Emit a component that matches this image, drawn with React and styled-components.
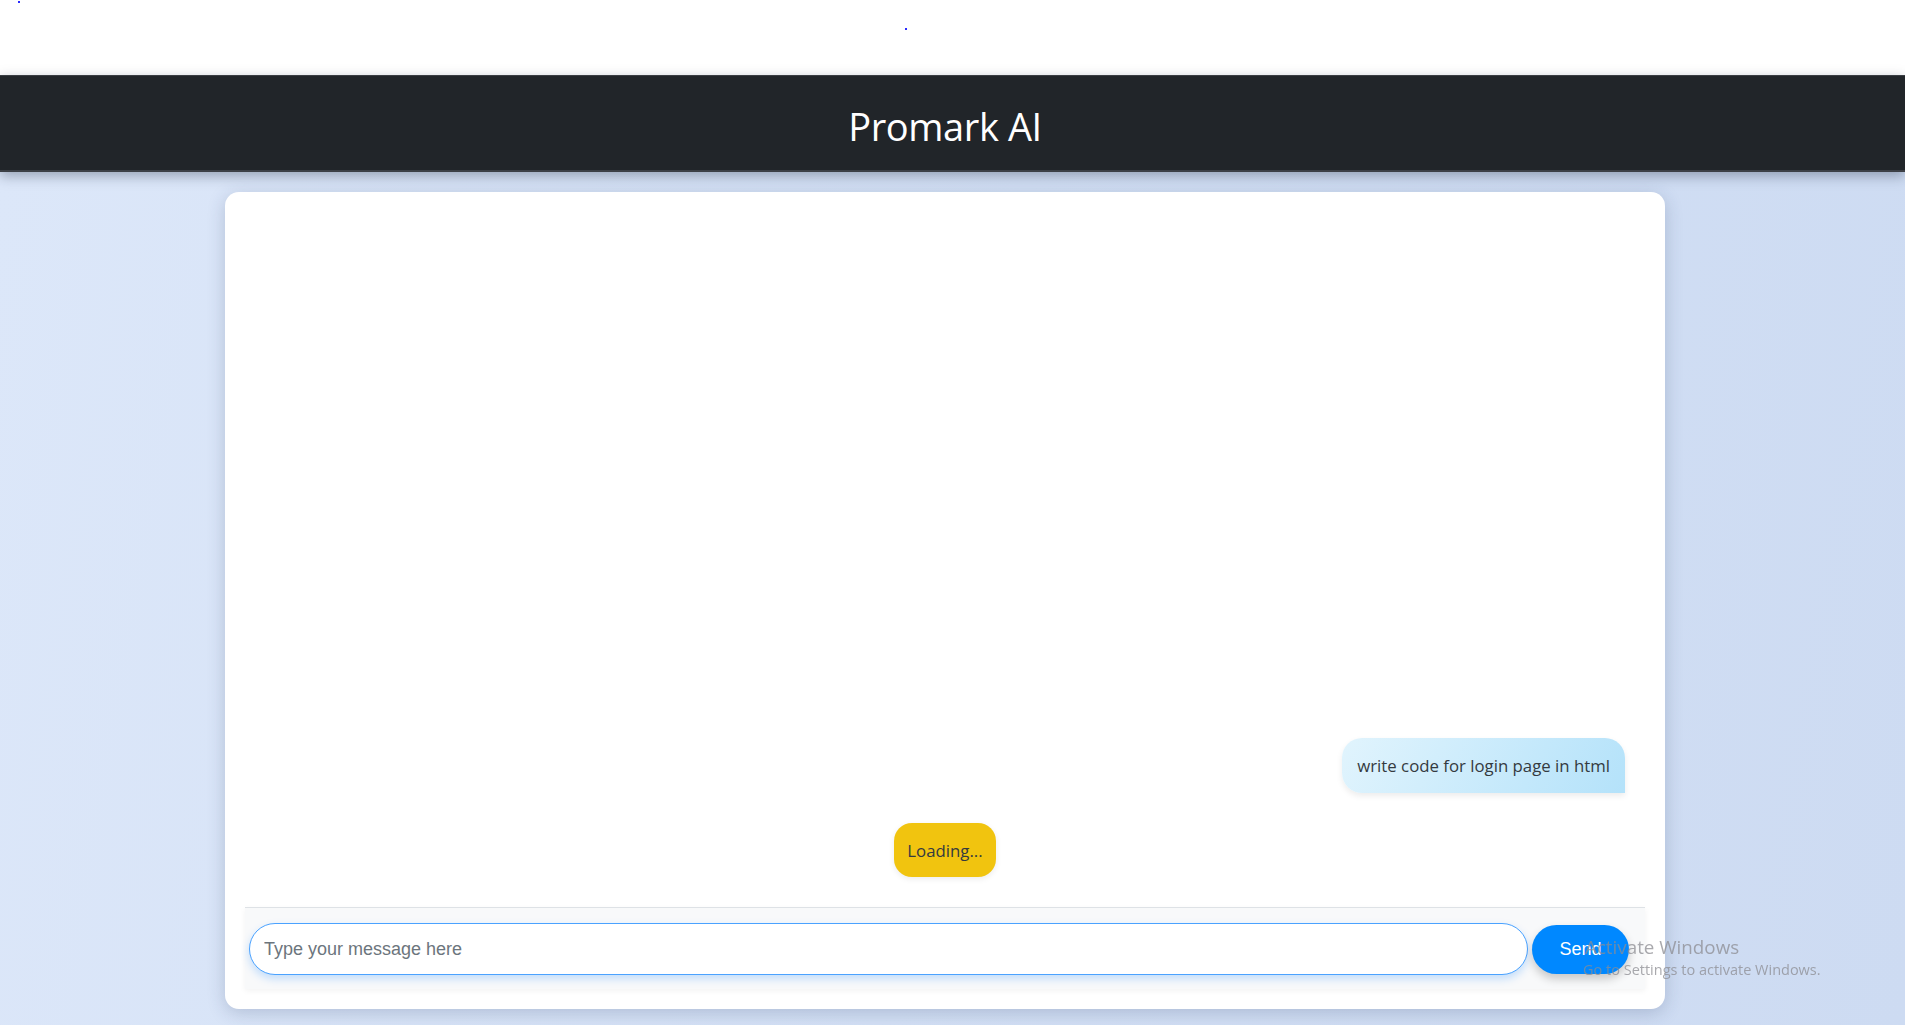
import React from "react";
import styled, { createGlobalStyle } from "styled-components";

const GlobalStyle = createGlobalStyle`
  html, body {
    margin: 0;
    padding: 0;
    background: #ffffff;
    font-family: "Open Sans", "Noto Sans", sans-serif;
  }
  * { box-sizing: border-box; }
`;

const Page = styled.div`
  display: flex;
  flex-direction: column;
  min-height: 1025px;
  overflow: hidden;
`;

const TopStrip = styled.div`
  position: relative;
  height: 75px;
  background: #ffffff;
`;

const Dot = styled.span`
  position: absolute;
  left: ${(p) => p.$x}px;
  top: ${(p) => p.$y}px;
  width: 2px;
  height: 2px;
  background: #2b2bff;
`;

const Header = styled.header`
  position: relative;
  z-index: 2;
  height: 97px;
  background: #212529;
  border-top: 1px solid #3a3e43;
  border-bottom: 2px solid #3c4046;
  box-shadow: 0 4px 12px rgba(30, 40, 60, 0.35);
  display: flex;
  align-items: center;
  justify-content: center;
  padding: 5px 15px 0 0;
`;

const Title = styled.h1`
  margin: 0;
  color: #ffffff;
  font-family: "Open Sans", "Noto Sans", sans-serif;
  font-weight: 400;
  font-size: 38px;
  letter-spacing: -0.4px;
  line-height: 1;
`;

const Main = styled.main`
  flex: 1;
  display: flex;
  justify-content: center;
  padding: 20px 15px 16px 0;
  background: linear-gradient(100deg, #dce7f9 0%, #d3e0f5 50%, #cddbf2 100%);
`;

const Card = styled.section`
  width: 1440px;
  height: 817px;
  background: #ffffff;
  border-radius: 14px;
  box-shadow: 0 4px 18px rgba(40, 60, 100, 0.22);
  padding: 20px;
  display: flex;
  flex-direction: column;
`;

const Messages = styled.div`
  flex: 1;
  display: flex;
  flex-direction: column;
  justify-content: flex-end;
  gap: 30px;
  padding-bottom: 30px;
`;

const Row = styled.div`
  display: flex;
  justify-content: ${(p) => p.$align};
  padding-right: ${(p) => (p.$align === "flex-end" ? "20px" : "0")};
`;

const UserBubble = styled.div`
  height: 55px;
  padding: 0 15px;
  display: flex;
  align-items: center;
  border-radius: 20px 20px 0 20px;
  background: linear-gradient(120deg, #e1f4fd 0%, #b4e2fa 100%);
  box-shadow: 0 3px 6px rgba(0, 0, 0, 0.08);
  color: #343a40;
  font-size: 16.8px;
`;

const LoadingBubble = styled.div`
  height: 54px;
  width: 102px;
  display: flex;
  align-items: center;
  justify-content: center;
  border-radius: 18px;
  background: #f1c40f;
  box-shadow: 0 2px 6px rgba(0, 0, 0, 0.08);
  color: #343a40;
  font-size: 16.8px;
`;

const Composer = styled.form`
  height: 82px;
  display: flex;
  align-items: center;
  gap: 4px;
  padding: 1px 16px 0 4px;
  background: #f8f9fa;
  border-top: 1px solid #dee2e6;
  box-shadow: 0 2px 6px rgba(0, 0, 0, 0.05);
`;

const Input = styled.input`
  flex: 1;
  height: 52px;
  padding: 0 14px;
  border: 1.5px solid #4aa2ff;
  border-radius: 26px;
  background: #ffffff;
  font-family: "Liberation Sans", Arial, sans-serif;
  font-size: 18px;
  color: #212529;
  outline: none;
  box-shadow: 0 4px 9px rgba(0, 123, 255, 0.22);
  &::placeholder {
    color: #6c757d;
  }
`;

const SendButton = styled.button`
  width: 97px;
  height: 49px;
  border: none;
  border-radius: 25px;
  background: #0088ff;
  color: #ffffff;
  font-family: "Liberation Sans", Arial, sans-serif;
  font-size: 18px;
  box-shadow: 0 5px 10px rgba(0, 0, 0, 0.2);
  cursor: pointer;
`;

const Watermark = styled.div`
  position: fixed;
  left: 1585px;
  top: 934px;
  pointer-events: none;
  z-index: 10;
  color: rgba(140, 140, 145, 0.75);
  font-family: "Open Sans", "Noto Sans", sans-serif;
`;

const WatermarkTitle = styled.div`
  font-size: 18.8px;
  line-height: 26px;
`;

const WatermarkSub = styled.div`
  font-size: 14.5px;
  line-height: 20px;
  margin-left: -2px;
`;

export default function App() {
  return (
    <>
      <GlobalStyle />
      <Page>
        <TopStrip>
          <Dot $x={18} $y={1} />
          <Dot $x={905} $y={28} />
        </TopStrip>
        <Header>
          <Title>Promark AI</Title>
        </Header>
        <Main>
          <Card>
            <Messages>
              <Row $align="flex-end">
                <UserBubble>write code for login page in html</UserBubble>
              </Row>
              <Row $align="center">
                <LoadingBubble>Loading...</LoadingBubble>
              </Row>
            </Messages>
            <Composer onSubmit={(e) => e.preventDefault()}>
              <Input placeholder="Type your message here" autoFocus />
              <SendButton type="submit">Send</SendButton>
            </Composer>
          </Card>
        </Main>
        <Watermark>
          <WatermarkTitle>Activate Windows</WatermarkTitle>
          <WatermarkSub>Go to Settings to activate Windows.</WatermarkSub>
        </Watermark>
      </Page>
    </>
  );
}
